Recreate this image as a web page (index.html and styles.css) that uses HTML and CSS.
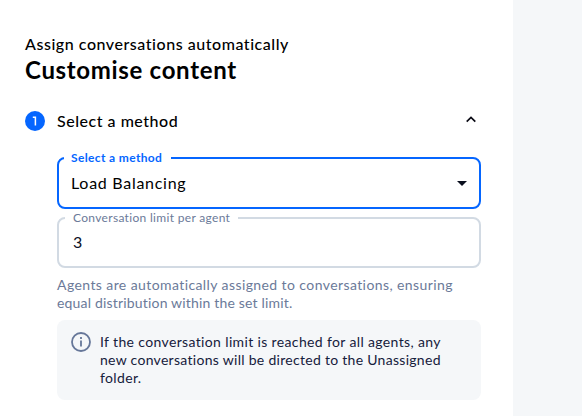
FILE: index.html
```
<!DOCTYPE html>
<html lang="en">
<head>
    <meta charset="UTF-8">
    <meta name="viewport" content="width=device-width, initial-scale=1.0">
    <title>Customise content</title>
    <link rel="stylesheet" href="styles.css">
</head>
<body>
    <main class="panel">
        <p class="subtitle">Assign conversations automatically</p>
        <h1 class="title">Customise content</h1>

        <div class="step-header">
            <span class="step-number">
                <svg width="20" height="20" viewBox="0 0 20 20" fill="none" stroke="#fff" stroke-width="1.5">
                    <path d="M7.8 6.2h2.6V14.6"/>
                </svg>
            </span>
            <h2 class="step-title">Select a method</h2>
            <svg class="chevron" width="12" height="8" viewBox="0 0 12 8" fill="none" stroke="#0a0a14" stroke-width="1.7">
                <path d="M1.7 5.6L6 1.4l4.3 4.2"/>
            </svg>
        </div>

        <div class="step-content">
            <fieldset class="field field-active">
                <legend><span class="label-active">Select a method</span></legend>
                <div class="field-value">
                    <span class="select-value">Load Balancing</span>
                    <svg width="10" height="5" viewBox="0 0 10 5"><path d="M0 0h10L5 5z" fill="#0a0f1e"/></svg>
                </div>
            </fieldset>

            <fieldset class="field field-limit">
                <legend><span class="label-limit">Conversation limit per agent</span></legend>
                <div class="field-value">
                    <span>3</span>
                </div>
            </fieldset>

            <p class="hint">Agents are automatically assigned to conversations, ensuring<br><span class="hint-end">equal distribution within the set limit.</span></p>

            <div class="info">
                <svg class="info-icon" width="20" height="20" viewBox="0 0 20 20" fill="none" stroke="#667799" stroke-width="1.8">
                    <circle cx="10" cy="10" r="9"/>
                    <path d="M10 8.4v6M10 5v2"/>
                </svg>
                <p class="info-text">If the conversation limit is reached for all agents, any<br><span class="info-middle">new conversations will be directed to the Unassigned</span><br>folder.</p>
            </div>
        </div>
    </main>
</body>
</html>
```

FILE: styles.css
```
* {
    box-sizing: border-box;
}

body {
    margin: 0;
    background: #f5f7f9;
    font-family: Lato, "Liberation Sans", sans-serif;
    color: #000;
}

h1, h2, p {
    margin: 0;
    white-space: nowrap;
}

.panel {
    width: 513px;
    height: 416px;
    padding: 34px 32px 0 25px;
    background: #fff;
    overflow: hidden;
}

.subtitle {
    font-size: 16px;
    line-height: 20px;
    font-weight: 500;
    letter-spacing: 0.54px;
}

.title {
    margin-top: 1px;
    font-size: 24px;
    line-height: 30px;
    font-weight: 700;
    letter-spacing: 0.68px;
}

.step-header {
    display: flex;
    align-items: center;
    height: 20px;
    margin-top: 26px;
    padding-right: 4px;
}

.step-number {
    width: 20px;
    height: 20px;
    border-radius: 50%;
    background: #0566ff;
}

.step-number svg {
    display: block;
}

.step-title {
    margin-left: 12px;
    font-size: 16px;
    line-height: 20px;
    font-weight: 500;
    letter-spacing: 0.52px;
}

.chevron {
    margin-left: auto;
    margin-bottom: 3px;
}

.step-content {
    margin: 20px 0 0 32px;
}

.field {
    min-width: 0;
    height: 58px;
    margin: 0;
    padding: 0 12px 0 5px;
    border: 2px solid #0566ff;
    border-radius: 8px;
}

.field legend {
    width: 107px;
    height: 14px;
    padding: 0 0 0 7px;
    font-size: 12px;
    line-height: 14px;
    white-space: nowrap;
}

.field-active legend {
    color: #0566ff;
    font-weight: 700;
}

.field-limit {
    height: 57px;
    margin-top: 2px;
    padding-left: 6px;
    border-color: #d2dae3;
}

.field-limit legend {
    width: 173px;
    padding-left: 8px;
    color: #6b7a99;
}

.field-value {
    display: flex;
    align-items: center;
    justify-content: space-between;
    height: 36px;
    padding-left: 7px;
    font-size: 16px;
    line-height: 20px;
}

.field-value svg {
    margin-top: 1px;
}

.field-limit .field-value {
    height: 34px;
    padding-left: 8px;
    color: #0a1024;
}

.select-value {
    letter-spacing: 0.72px;
}

.label-active {
    letter-spacing: 0.36px;
}

.label-limit {
    letter-spacing: 0.32px;
}

.hint {
    margin-top: 8px;
    font-size: 14px;
    line-height: 18px;
    color: #6b7a99;
    letter-spacing: 0.41px;
}

.hint-end {
    letter-spacing: 0.18px;
}

.info {
    display: flex;
    height: 80px;
    margin-top: 8px;
    padding: 12px 14px;
    border-radius: 8px;
    background: #f5f7f9;
}

.info-icon {
    flex: none;
}

.info-text {
    margin: 1px 0 0 9px;
    font-size: 14px;
    line-height: 18px;
    color: #15203c;
    letter-spacing: 0.36px;
}

.info-middle {
    letter-spacing: 0.29px;
}
```
